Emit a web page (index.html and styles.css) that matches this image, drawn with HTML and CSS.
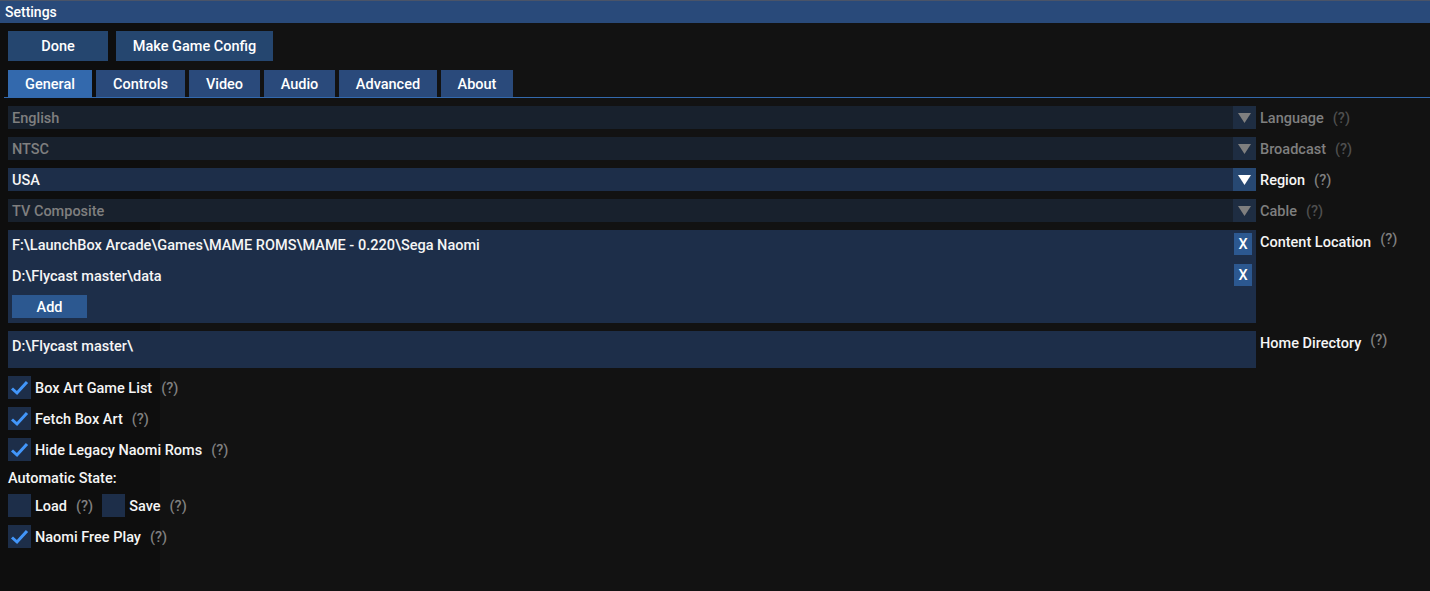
FILE: index.html
```html
<!DOCTYPE html>
<html lang="en">
  <head>
    <meta charset="UTF-8" />
    <meta name="viewport" content="width=device-width, initial-scale=1.0" />
    <title>Settings</title>
    <link rel="stylesheet" href="styles.css">
  </head>
  <body>
    <div class="window">
      <div class="title-bar">Settings</div>

      <div class="content">
        <div class="top-buttons">
          <button class="btn btn-done">Done</button>
          <button class="btn btn-config">Make Game Config</button>
        </div>

        <div class="tab-bar">
          <div class="tab tab-general active">General</div>
          <div class="tab tab-controls">Controls</div>
          <div class="tab tab-video">Video</div>
          <div class="tab tab-audio">Audio</div>
          <div class="tab tab-advanced">Advanced</div>
          <div class="tab tab-about">About</div>
        </div>

        <div class="settings">
          <div class="row disabled">
            <div class="combo">
              <span class="combo-value">English</span>
              <span class="combo-arrow"><svg width="23" height="23" viewBox="0 0 23 23"><polygon points="5,7 18,7 11.5,17" /></svg></span>
            </div>
            <span class="label">Language</span>
            <span class="help">(?)</span>
          </div>

          <div class="row disabled">
            <div class="combo">
              <span class="combo-value">NTSC</span>
              <span class="combo-arrow"><svg width="23" height="23" viewBox="0 0 23 23"><polygon points="5,7 18,7 11.5,17" /></svg></span>
            </div>
            <span class="label">Broadcast</span>
            <span class="help">(?)</span>
          </div>

          <div class="row">
            <div class="combo">
              <span class="combo-value">USA</span>
              <span class="combo-arrow"><svg width="23" height="23" viewBox="0 0 23 23"><polygon points="5,7 18,7 11.5,17" /></svg></span>
            </div>
            <span class="label">Region</span>
            <span class="help">(?)</span>
          </div>

          <div class="row disabled">
            <div class="combo">
              <span class="combo-value">TV Composite</span>
              <span class="combo-arrow"><svg width="23" height="23" viewBox="0 0 23 23"><polygon points="5,7 18,7 11.5,17" /></svg></span>
            </div>
            <span class="label">Cable</span>
            <span class="help">(?)</span>
          </div>

          <div class="row">
            <div class="path-box">
              <div class="path-line">
                <span class="path-text">F:\LaunchBox Arcade\Games\MAME ROMS\MAME - 0.220\Sega Naomi</span>
                <button class="btn-remove">X</button>
              </div>
              <div class="path-line">
                <span class="path-text">D:\Flycast master\data</span>
                <button class="btn-remove">X</button>
              </div>
              <button class="btn-add">Add</button>
            </div>
            <span class="label">Content Location</span>
            <span class="help raised">(?)</span>
          </div>

          <div class="row">
            <div class="path-box home-box">
              <div class="path-line">
                <span class="path-text">D:\Flycast master\</span>
              </div>
            </div>
            <span class="label">Home Directory</span>
            <span class="help raised">(?)</span>
          </div>

          <div class="row">
            <span class="checkbox checked"><svg width="23" height="23" viewBox="0 0 23 23"><polyline points="4,12.5 9,17 19,6" /></svg></span>
            <span class="check-label">Box Art Game List</span>
            <span class="help">(?)</span>
          </div>

          <div class="row">
            <span class="checkbox checked"><svg width="23" height="23" viewBox="0 0 23 23"><polyline points="4,12.5 9,17 19,6" /></svg></span>
            <span class="check-label">Fetch Box Art</span>
            <span class="help">(?)</span>
          </div>

          <div class="row">
            <span class="checkbox checked"><svg width="23" height="23" viewBox="0 0 23 23"><polyline points="4,12.5 9,17 19,6" /></svg></span>
            <span class="check-label">Hide Legacy Naomi Roms</span>
            <span class="help">(?)</span>
          </div>

          <div class="section-text">Automatic State:</div>

          <div class="row">
            <span class="checkbox"></span>
            <span class="check-label">Load</span>
            <span class="help">(?)</span>
            <span class="checkbox spaced"></span>
            <span class="check-label">Save</span>
            <span class="help">(?)</span>
          </div>

          <div class="row">
            <span class="checkbox checked"><svg width="23" height="23" viewBox="0 0 23 23"><polyline points="4,12.5 9,17 19,6" /></svg></span>
            <span class="check-label">Naomi Free Play</span>
            <span class="help">(?)</span>
          </div>
        </div>
      </div>
    </div>
  </body>
</html>
```

FILE: styles.css
```css
body {
  font-family: Roboto, "Noto Sans", sans-serif;
  font-weight: 500;
  font-size: 14.5px;
  color: #f5f5f5;
  margin: 0;
  height: 591px;
  overflow: hidden;
  background: linear-gradient(to right, #0e0e0e 160px, #121212 160px);
}

.window {
  height: 100%;
  display: flex;
  flex-direction: column;
}

.title-bar {
  height: 22px;
  line-height: 22px;
  padding-left: 5px;
  background: #294a7a;
  border-top: 1px solid #4a5468;
  color: #ffffff;
  font-size: 14px;
}

.content {
  padding: 8px 8px 0 8px;
  display: flex;
  flex-direction: column;
}

.top-buttons {
  display: flex;
  gap: 8px;
}

button {
  font-family: inherit;
  font-weight: 500;
  font-size: 14.5px;
  color: #ffffff;
  border: none;
  padding: 0;
  cursor: pointer;
}

.btn {
  height: 30px;
  padding: 1px 0 0 0;
  background: #25466f;
}

.btn-done {
  width: 100px;
}

.btn-config {
  width: 157px;
}

.tab-bar {
  display: flex;
  gap: 4px;
  margin: 9px -8px 0 -4px;
  padding-left: 4px;
  border-bottom: 1px solid #3369ad;
}

.tab {
  height: 25px;
  line-height: 25px;
  padding-top: 2px;
  text-align: center;
  background: #2a4a7b;
  color: #ffffff;
}

.tab.active {
  background: #3369ad;
}

.tab-general {
  width: 84px;
}

.tab-controls {
  width: 89px;
}

.tab-video,
.tab-audio {
  width: 71px;
}

.tab-advanced {
  width: 98px;
}

.tab-about {
  width: 72px;
}

.settings {
  margin-top: 8px;
  display: flex;
  flex-direction: column;
  gap: 8px;
}

.row {
  display: flex;
  align-items: flex-start;
  line-height: 21px;
}

.combo {
  width: 1248px;
  height: 23px;
  display: flex;
  background: #1d2e49;
}

.combo-value,
.label,
.help,
.check-label,
.path-text {
  padding-top: 2px;
}

.combo-value {
  flex: 1;
  padding-left: 4px;
}

.combo-arrow {
  width: 23px;
  height: 23px;
  background: #274872;
}

.combo-arrow svg {
  display: block;
  fill: #ffffff;
}

.label {
  margin-left: 4px;
}

.help {
  margin-left: 9px;
  color: #808080;
}

.help.raised {
  line-height: 16px;
}

.row.disabled .combo {
  background: #18212d;
}

.row.disabled .combo-arrow {
  background: #1e2d42;
}

.row.disabled .combo-arrow svg {
  fill: #7f7f7f;
}

.row.disabled .combo-value,
.row.disabled .label {
  color: #7f7f7f;
}

.row.disabled .help {
  color: #4f4f4f;
}

.path-box {
  width: 1240px;
  padding: 3px 4px 5px 4px;
  background: #1d2e49;
  display: flex;
  flex-direction: column;
  gap: 8px;
}

.home-box {
  height: 29px;
}

.path-line {
  height: 23px;
  display: flex;
  justify-content: space-between;
}

.btn-remove {
  width: 18px;
  height: 22px;
  background: #2c5890;
}

.btn-add {
  width: 75px;
  height: 23px;
  padding-top: 1px;
  background: #2c5890;
}

.checkbox {
  width: 23px;
  height: 23px;
  background: #1d2e49;
}

.checkbox svg {
  display: block;
  fill: none;
  stroke: #4296fa;
  stroke-width: 3;
}

.checkbox.spaced {
  margin-left: 9px;
}

.check-label {
  margin-left: 4px;
}

.section-text {
  line-height: 15px;
  padding-top: 2px;
}
```
